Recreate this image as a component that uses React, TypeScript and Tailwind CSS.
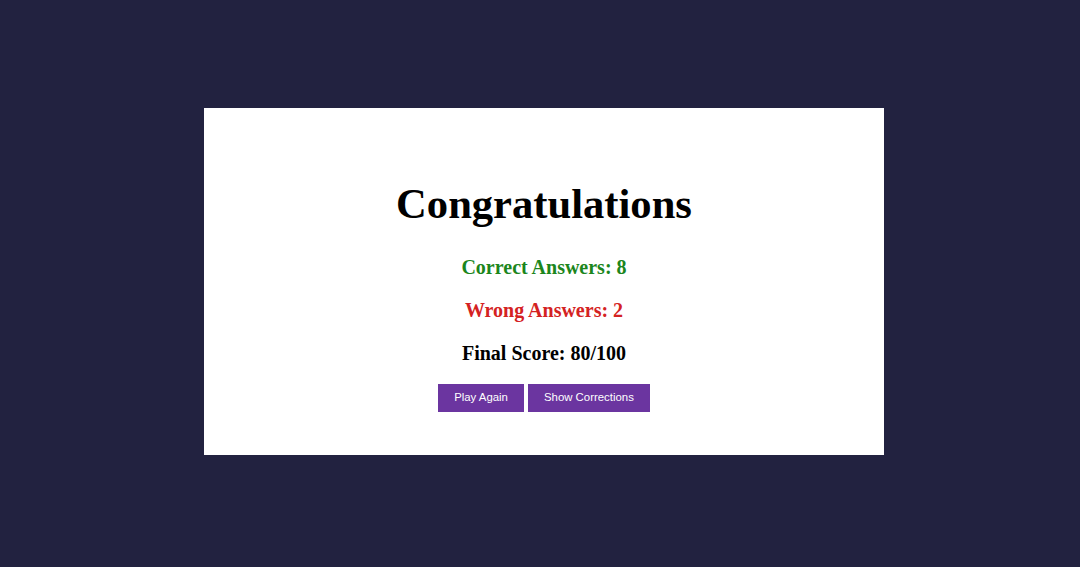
import React from 'react';

export default function App() {
  return (
    <div className="min-h-[567px] w-full bg-[#222240] pt-[108px] pl-[204px]">
      <div className="flex h-[347px] w-[680px] flex-col items-center bg-white pt-[72px] font-['Liberation_Serif',serif]">
        <h1 className="text-[42.6px] leading-[48px] font-bold text-black">Congratulations</h1>
        <p className="mt-[27px] text-[20px] leading-[24px] font-bold text-[#1c861c]">Correct Answers: 8</p>
        <p className="mt-[19px] text-[20px] leading-[24px] font-bold text-[#d42222]">Wrong Answers: 2</p>
        <p className="mt-[19px] text-[20px] leading-[24px] font-bold text-black">Final Score: 80/100</p>
        <div className="mt-[19px] flex gap-[4px] font-['Liberation_Sans',Arial,sans-serif]">
          <button type="button" className="h-[28px] bg-[#6b35a0] px-[16px] text-[11.4px] text-white">
            Play Again
          </button>
          <button type="button" className="h-[28px] bg-[#6b35a0] px-[16px] text-[11.4px] text-white">
            Show Corrections
          </button>
        </div>
      </div>
    </div>
  );
}
